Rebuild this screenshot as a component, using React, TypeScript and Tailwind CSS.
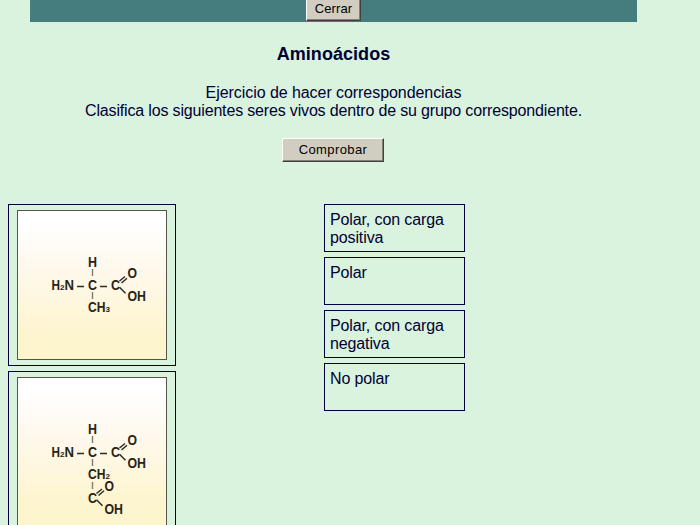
import type { ReactNode } from 'react';

type LabelProps = { x: number; y: number; w: number; size?: number; children: ReactNode };

function Atom({ x, y, w, size = 14.5, children }: LabelProps) {
  return (
    <text x={x} y={y} textLength={w} lengthAdjust="spacingAndGlyphs" fontSize={size}>
      {children}
    </text>
  );
}

// Carboxyl group: the carbon sits at (x, y) with =O above and OH below right
function Carboxyl({ x, y }: { x: number; y: number }) {
  return (
    <g>
      <Atom x={x} y={y} w={9}>C</Atom>
      <Atom x={x + 16.5} y={y - 12} w={9.5}>O</Atom>
      <Atom x={x + 16.5} y={y + 11} w={18.5}>OH</Atom>
      <path
        d={`M${x + 8.5} ${y - 9}l5.5-4.5M${x + 10.5} ${y - 7}l5.5-4.7M${x + 8.5} ${y - 2.8}l6 6`}
        stroke="#302a20"
        strokeWidth="1.5"
        fill="none"
      />
    </g>
  );
}

function Molecule({ residue }: { residue: 'CH3' | 'CH2' }) {
  return (
    <svg
      width="148"
      height="148"
      viewBox="1 1 148 148"
      className="block font-['Liberation_Sans',Arial,sans-serif] font-bold"
      fill="#292418"
    >
      <Atom x={71} y={57} w={9}>H</Atom>
      <Atom x={34.5} y={80} w={8.5}>H</Atom>
      <Atom x={43} y={80} w={4.5} size={8}>2</Atom>
      <Atom x={47.5} y={80} w={9.5}>N</Atom>
      <Atom x={71} y={80} w={9}>C</Atom>
      <path d="M60 76.5h7M83 76.5h7" stroke="#302a20" strokeWidth="1.3" />
      <path d="M75.5 59v7M75.5 82v7" stroke="#817b70" strokeWidth="1.4" />
      <Carboxyl x={94} y={80} />
      <Atom x={71} y={102} w={17.5}>CH</Atom>
      <Atom x={88.5} y={102} w={4.5} size={8}>{residue === 'CH3' ? '3' : '2'}</Atom>
      {residue === 'CH2' && (
        <>
          <path d="M75.5 105v7" stroke="#817b70" strokeWidth="1.4" />
          <Carboxyl x={71} y={125.5} />
        </>
      )}
    </svg>
  );
}

function Card({ residue }: { residue: 'CH3' | 'CH2' }) {
  return (
    <div className="h-[162px] w-[168px] shrink-0 border border-[#000040] px-2 py-[5px]">
      <div className="size-[150px] border border-[#56564a] bg-linear-to-b from-white from-8% via-[#fff9f0] via-35% to-[#fdf5cd] to-85%">
        <Molecule residue={residue} />
      </div>
    </div>
  );
}

const groups = [
  ['Polar, con carga', 'positiva'],
  ['Polar'],
  ['Polar, con carga', 'negativa'],
  ['No polar'],
];

const button =
  'border border-t-white border-l-white border-r-[#404040] border-b-[#404040] bg-[#d1cdc0] text-[13px] text-black shadow-[inset_-1px_-1px_0_#808078]';

export default function App() {
  return (
    <div className="flex h-[525px] w-[700px] flex-col overflow-hidden bg-[#daf3df] font-['Liberation_Sans',Arial,sans-serif] text-base leading-[18px] text-[#000033]">
      <div className="ml-[30px] flex h-[22px] w-[607px] shrink-0 items-start justify-center bg-[#457d7e]">
        <button className={`${button} h-[21px] w-[55px] border-t-0 pb-[3px] leading-[17px] tracking-[0.1px]`}>
          Cerrar
        </button>
      </div>
      <div className="flex w-[667px] shrink-0 flex-col items-center">
        <h1 className="mt-[22px] text-[18px] leading-5 font-bold tracking-[0.05px]">Aminoácidos</h1>
        <p className="mt-5 text-center whitespace-nowrap">
          <span className="tracking-[-0.06px]">Ejercicio de hacer correspondencias</span>
          <br />
          <span className="tracking-[-0.165px]">
            Clasifica los siguientes seres vivos dentro de su grupo correspondiente.
          </span>
        </p>
        <button className={`${button} mt-[18px] mr-px h-[24px] w-[102px] pb-px leading-[20px] tracking-[0.4px]`}>
          Comprobar
        </button>
      </div>
      <div className="mt-[42px] flex shrink-0 items-start pl-2">
        <div className="flex flex-col gap-[5px]">
          <Card residue="CH3" />
          <Card residue="CH2" />
        </div>
        <div className="ml-[148px] flex flex-col gap-[5px]">
          {groups.map((lines, i) => (
            <div
              key={i}
              className="h-12 w-[141px] border border-[#000040] px-[5px] py-[6px] tracking-[-0.12px] whitespace-nowrap"
            >
              {lines.map((line) => (
                <div key={line}>{line}</div>
              ))}
            </div>
          ))}
        </div>
      </div>
    </div>
  );
}
